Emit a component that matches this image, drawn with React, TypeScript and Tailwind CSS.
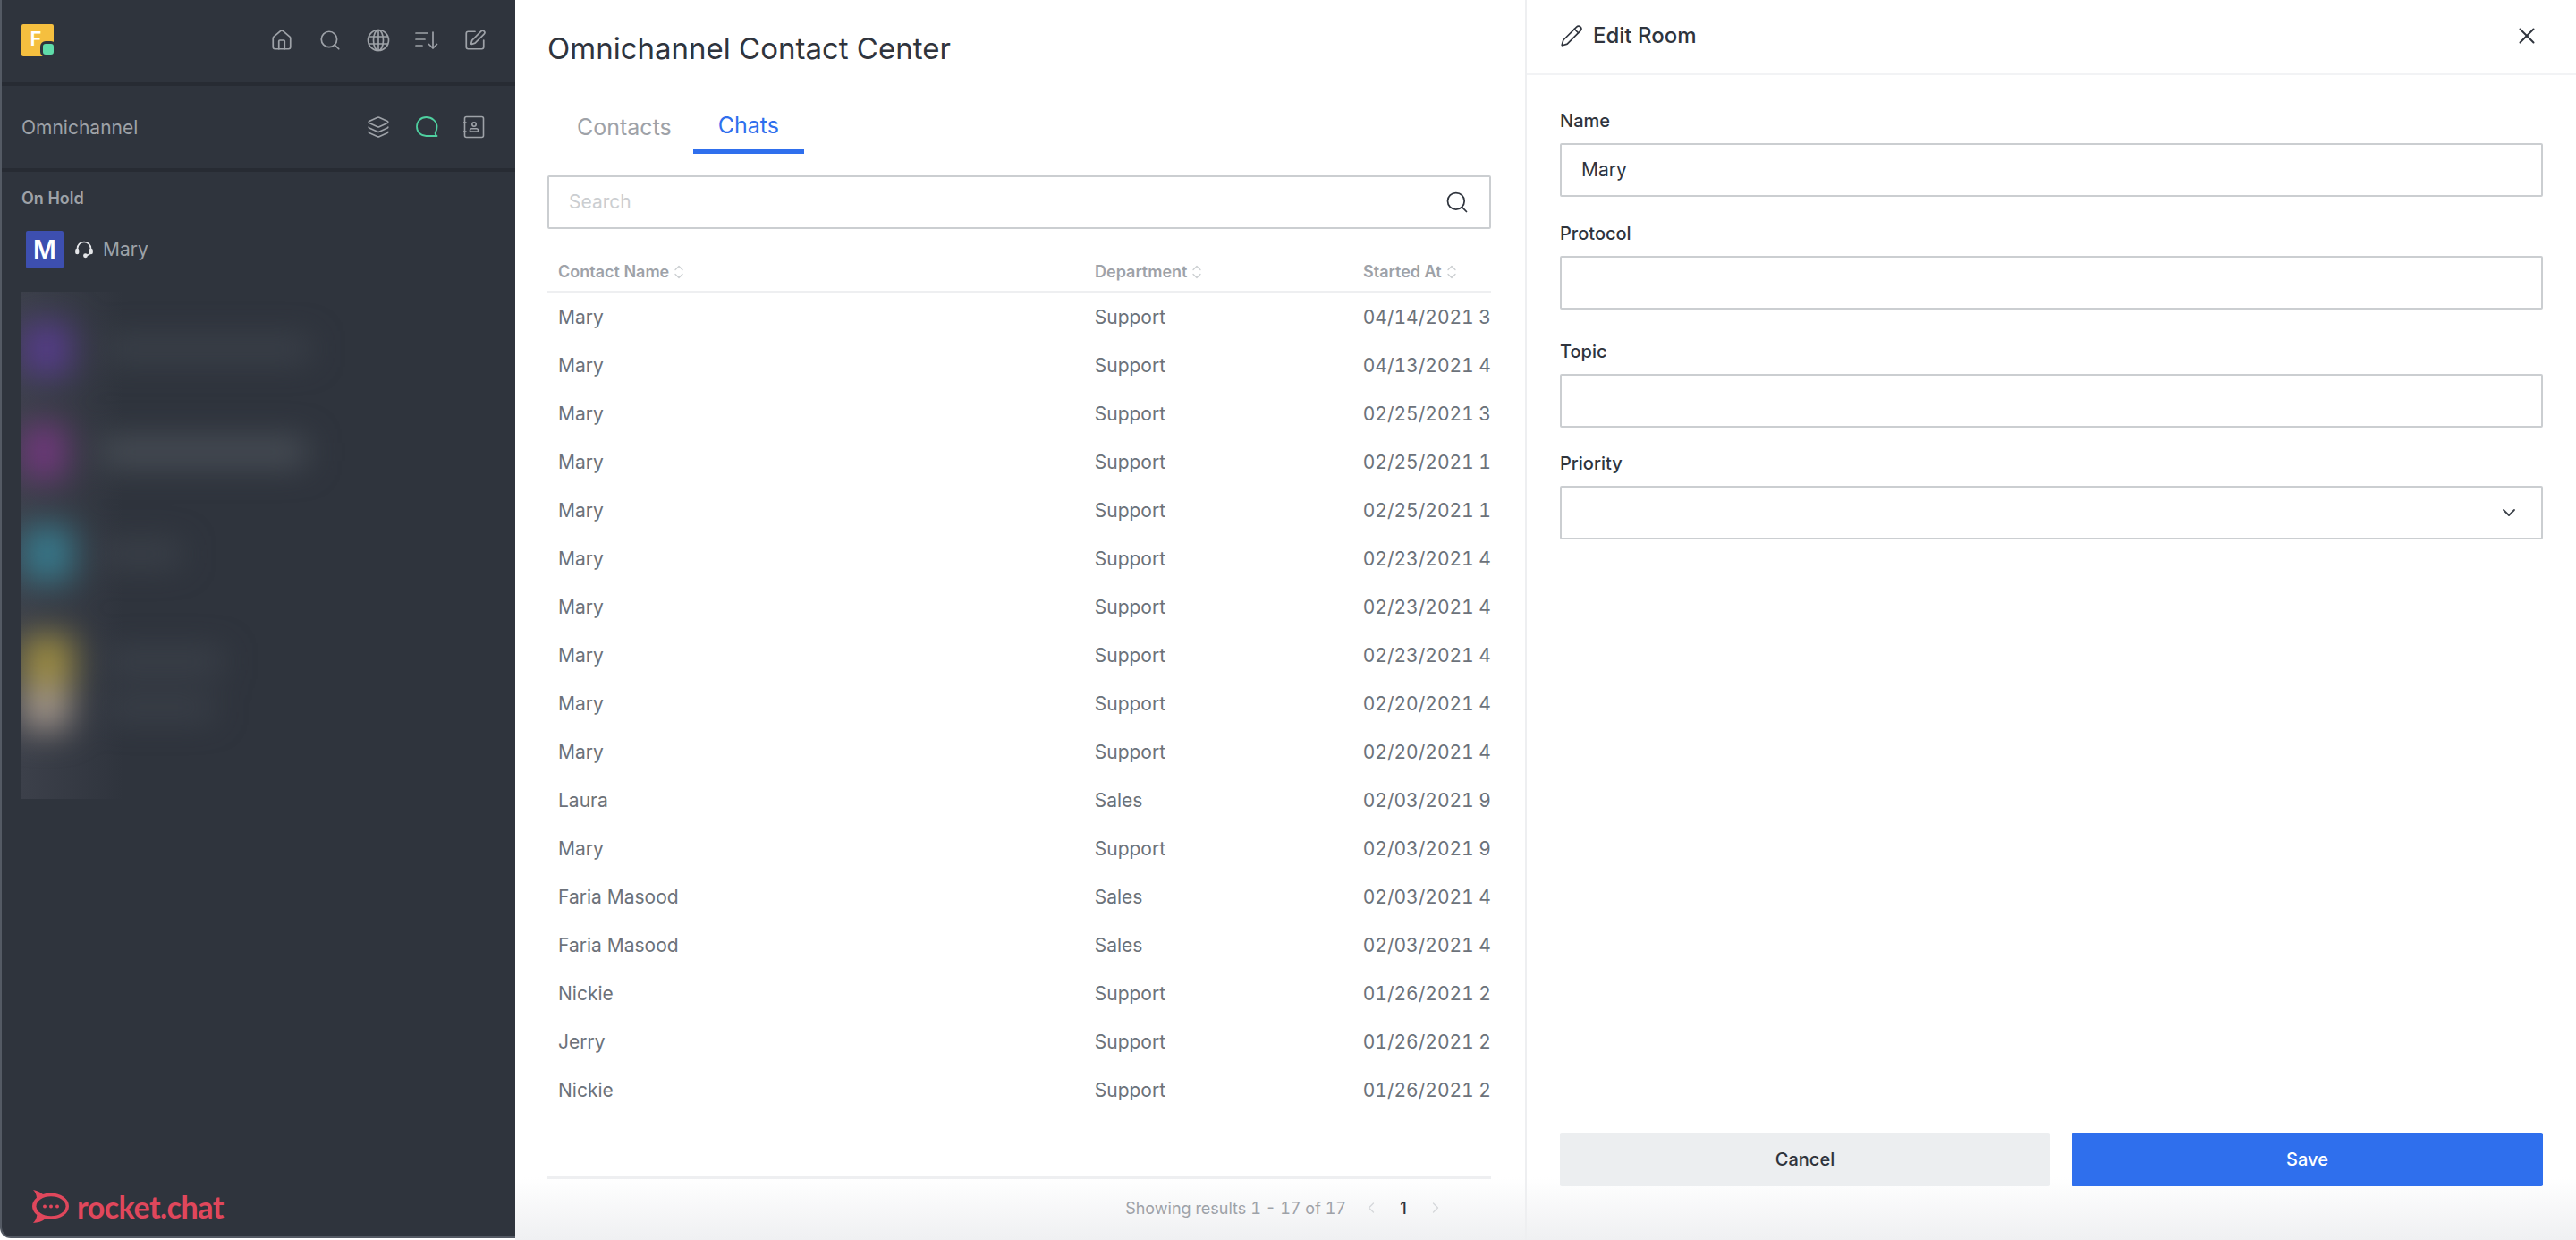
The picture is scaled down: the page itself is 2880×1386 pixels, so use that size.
import { ChevronDown, ChevronLeft, ChevronRight, House, Layers, Pencil, Search, SquarePen, X } from "lucide-react";

const rows: [string, string, string][] = [
  ["Mary", "Support", "04/14/2021 3"],
  ["Mary", "Support", "04/13/2021 4"],
  ["Mary", "Support", "02/25/2021 3"],
  ["Mary", "Support", "02/25/2021 1"],
  ["Mary", "Support", "02/25/2021 1"],
  ["Mary", "Support", "02/23/2021 4"],
  ["Mary", "Support", "02/23/2021 4"],
  ["Mary", "Support", "02/23/2021 4"],
  ["Mary", "Support", "02/20/2021 4"],
  ["Mary", "Support", "02/20/2021 4"],
  ["Laura", "Sales", "02/03/2021 9"],
  ["Mary", "Support", "02/03/2021 9"],
  ["Faria Masood", "Sales", "02/03/2021 4"],
  ["Faria Masood", "Sales", "02/03/2021 4"],
  ["Nickie", "Support", "01/26/2021 2"],
  ["Jerry", "Support", "01/26/2021 2"],
  ["Nickie", "Support", "01/26/2021 2"],
];

function Globe() {
  return (
    <svg width="26" height="26" viewBox="0 0 26 26" fill="none" stroke="#9ea2a8" strokeWidth="1.7">
      <circle cx="13" cy="13" r="11.5" />
      <ellipse cx="13" cy="13" rx="5.5" ry="11.5" />
      <path d="M13 1.5v23M2.5 9h21M2.5 17h21" />
    </svg>
  );
}

function SortList() {
  return (
    <svg width="26" height="24" viewBox="0 0 26 24" fill="none" stroke="#9ea2a8" strokeWidth="1.7" strokeLinecap="round" strokeLinejoin="round">
      <path d="M1 4h13M1 11h10M1 18h7M20 3v18M15.5 16.5 20 21l4.5-4.5" />
    </svg>
  );
}

function Bubble() {
  return (
    <svg width="26" height="26" viewBox="0 0 26 26" fill="none" stroke="#4fd0a0" strokeWidth="1.8" strokeLinecap="round" strokeLinejoin="round">
      <path d="M12.5 2C6.5 2 2 6.6 2 12.4 2 18.4 6.5 23 12.5 23h12c-1.8-1.2-2.2-3.2-1.2-5 .8-1.5 1.2-3.2 1.2-5.2C24.500 6.600 19 2 12.500 2Z" />
    </svg>
  );
}

function ContactBook() {
  return (
    <svg width="24" height="26" viewBox="0 0 24 26" fill="none" stroke="#9ea2a8" strokeWidth="1.6" strokeLinecap="round" strokeLinejoin="round">
      <rect x="1.500" y="1.500" width="21" height="23" rx="2" />
      <circle cx="12" cy="10" r="2.200" />
      <path d="M7.500 18v-1.500c0-1 .8-1.800 1.800-1.800h5.400c1 0 1.800.8 1.800 1.800V18ZM0 8h3M0 18h3" />
    </svg>
  );
}

function Headset() {
  return (
    <svg width="20" height="20" viewBox="0 0 20 20" fill="none" stroke="#e4e6e9" strokeWidth="1.700" strokeLinecap="round">
      <path d="M2.500 10V9a7.500 7.500 0 0 1 15 0v2c0 3-2 5-5 5.300" />
      <rect x="1" y="9.500" width="2.500" height="5" rx="1.200" fill="#e4e6e9" />
      <rect x="16.500" y="9.500" width="2.500" height="5" rx="1.200" fill="#e4e6e9" />
      <circle cx="11.500" cy="16.700" r="1.600" fill="#e4e6e9" />
    </svg>
  );
}

function SortArrows() {
  return (
    <svg width="10" height="16" viewBox="0 0 10 16" fill="none" stroke="#cbced1" strokeWidth="1.300" strokeLinecap="round" strokeLinejoin="round" className="ml-[6px]">
      <path d="M1 5.500 5 1.500l4 4M1 10.500l4 4 4-4" />
    </svg>
  );
}

function RocketLogo() {
  return (
    <svg width="42" height="37" viewBox="0 0 42 37" fill="none">
      <path
        d="M1 0c4 .5 8 2.600 11 5 3-.9 6-1.400 9-1.400 11 0 20 6.400 20 14.600S32 32.500 21 32.500c-2 0-4-.2-6-.6C11 35.400 6 36.500 1 37c2.500-2.500 4-5.500 4.300-9C2 25.300 0 22 0 18.200c0-3.700 1.900-7 5-9.500C4.700 5.300 3.300 2.300 1 0Z"
        fill="#e0475c"
      />
      <ellipse cx="21" cy="18.200" rx="16.500" ry="11" fill="#2f343d" />
      <circle cx="14" cy="18.500" r="2" fill="#e0475c" />
      <circle cx="21" cy="18.500" r="2" fill="#e0475c" />
      <circle cx="28" cy="18.500" r="2" fill="#e0475c" />
    </svg>
  );
}

function Field({ label, className, value, select }: { label: string; className: string; value?: string; select?: boolean }) {
  return (
    <div className={className}>
      <div className="text-[20px] leading-[24px] font-medium text-[#2f343d]">{label}</div>
      <div className="mt-[13px] flex h-[60px] items-center rounded-[2px] border-2 border-[#cbced1] bg-white pr-[24px] pb-[1px] pl-[22px] text-[21px] text-[#2f343d]">
        <span className="flex-1">{value}</span>
        {select && <ChevronDown size={24} strokeWidth={1.800} color="#3c4149" />}
      </div>
    </div>
  );
}

export default function App() {
  return (
    <div className="relative flex h-[1386px] w-[2880px] overflow-hidden bg-white font-[Inter,sans-serif]">
      <div className="pointer-events-none absolute right-0 bottom-0 left-[576px] h-[70px] bg-[linear-gradient(to_bottom,rgba(240,241,243,0),#eff0f2)]" />
      <aside className="relative flex h-[1384px] w-[576px] shrink-0 flex-col rounded-bl-[12px] border-b-2 border-l-2 border-[#545a64] bg-[#2f343d] text-[#9ea2a8]">
        <div className="flex h-[92px] shrink-0 items-center pr-[32px] pb-[2px] pl-[22px]">
          <div className="relative flex h-[36px] w-[36px] items-center justify-center rounded-[2px] bg-[#f5bf3f] pr-[4px] pb-[4px] text-[22px] font-semibold text-white">
            F
            <span className="absolute -right-[3px] -bottom-[1px] h-[18px] w-[18px] rounded-[6px] border-[3px] border-[#2f343d] bg-[#5fdcaa]" />
          </div>
          <div className="ml-auto flex items-center gap-[28px]">
            <House size={26} strokeWidth={1.600} />
            <Search size={26} strokeWidth={1.600} />
            <Globe />
            <SortList />
            <SquarePen size={26} strokeWidth={1.600} />
          </div>
        </div>
        <div className="h-[4px] shrink-0 bg-[#272b33]" />
        <div className="flex h-[92px] shrink-0 items-center pr-[34px] pl-[22px] text-[21px]">
          <span className="pt-[2px]">Omnichannel</span>
          <div className="ml-auto flex items-center gap-[28px]">
            <Layers size={26} strokeWidth={1.500} />
            <Bubble />
            <ContactBook />
          </div>
        </div>
        <div className="h-[4px] shrink-0 bg-[#272b33]" />
        <div className="pt-[18px] pl-[22px] text-[18px] leading-[24px] font-semibold">On Hold</div>
        <div className="mt-[24px] flex h-[42px] items-center pl-[27px]">
          <div className="flex h-[42px] w-[42px] items-center justify-center rounded-[2px] bg-[#3d4fb0] text-[28px] font-semibold text-white">M</div>
          <div className="ml-[13px]">
            <Headset />
          </div>
          <span className="ml-[11px] text-[21px]">Mary</span>
        </div>
        <div className="mt-[26px] ml-[22px] h-[567px] w-[380px] overflow-hidden bg-[linear-gradient(to_right,#3c404a,#2f343d_30%)]">
          <div className="flex flex-col blur-[18px]">
            <div className="mt-[34px] flex h-[60px] items-center">
              <div className="h-[60px] w-[56px] bg-[#553c88]" />
              <div className="ml-[36px] h-[20px] w-[230px] bg-[#40464f]" />
            </div>
            <div className="mt-[54px] flex h-[62px] items-center">
              <div className="h-[62px] w-[50px] bg-[#70387c]" />
              <div className="ml-[38px] h-[28px] w-[230px] bg-[#4c525a]" />
            </div>
            <div className="mt-[52px] flex h-[62px] items-center">
              <div className="h-[62px] w-[58px] bg-[#37788a]" />
              <div className="ml-[30px] h-[20px] w-[90px] bg-[#40464f]" />
            </div>
            <div className="mt-[60px] flex h-[58px] items-center">
              <div className="h-[58px] w-[58px] bg-[#9a8a42]" />
              <div className="ml-[36px] h-[20px] w-[130px] bg-[#40464f]" />
            </div>
            <div className="flex h-[48px] items-center">
              <div className="h-[48px] w-[54px] bg-[#a0948a]" />
              <div className="ml-[40px] h-[18px] w-[120px] bg-[#40464f]" />
            </div>
          </div>
        </div>
        <div className="mt-auto mb-[15px] flex items-center gap-[8px] pl-[34px]">
          <RocketLogo />
          <span className="font-[Lato,sans-serif] text-[34px] leading-[36px] font-bold tracking-[-0.5px] text-[#e0475c]">rocket.chat</span>
        </div>
      </aside>

      <main className="relative flex w-[1129px] shrink-0 flex-col pr-[38px] pl-[36px]">
        <h1 className="pt-[32px] text-[33px] leading-[44px] font-normal text-[#2f343d]">Omnichannel Contact Center</h1>
        <div className="mt-[44px] ml-[6px] flex h-[52px] text-[25px] leading-[36px]">
          <div className="pt-[4px] pr-[24px] pl-[27px] text-[#9ea2a8]">Contacts</div>
          <div className="border-b-[6px] border-[#2f6fed] px-[28px] pt-[2px] text-[#2f6fed]">Chats</div>
        </div>
        <div className="mt-[24px] flex h-[60px] items-center rounded-[2px] border-2 border-[#cbced1] pr-[22px] pl-[22px]">
          <input placeholder="Search" className="min-w-0 flex-1 bg-transparent text-[21px] outline-none placeholder:text-[#cbced1]" />
          <Search size={28} strokeWidth={1.500} color="#2f343d" />
        </div>
        <div className="flex h-[71px] items-end border-b-2 border-[#eeeff1] pb-[9px] pl-[12px] text-[18px] leading-[24px] font-semibold text-[#9ea2a8]">
          <div className="flex w-[600px] items-center">
            Contact Name
            <SortArrows />
          </div>
          <div className="flex w-[300px] items-center">
            Department
            <SortArrows />
          </div>
          <div className="flex items-center">
            Started At
            <SortArrows />
          </div>
        </div>
        <div className="flex flex-col pt-[1px] text-[21px] text-[#6c727a]">
          {rows.map((r, i) => (
            <div key={i} className="flex h-[54px] items-center pl-[12px]">
              <div className="w-[600px]">{r[0]}</div>
              <div className="w-[300px]">{r[1]}</div>
              <div className="whitespace-nowrap tabular-nums">{r[2]}</div>
            </div>
          ))}
        </div>
        <div className="mt-auto flex h-[72px] items-center justify-end border-t-4 border-[#eeeff1] pr-[44px] pb-[4px] text-[18px] text-[#9ea2a8]">
          <span className="mr-[10px] tabular-nums">Showing results 1 - 17 of 17</span>
          <div className="flex w-[36px] justify-center">
            <ChevronLeft size={20} strokeWidth={1.500} color="#d5d7da" />
          </div>
          <div className="w-[36px] text-center font-medium text-[#2f343d]">1</div>
          <div className="flex w-[36px] justify-center">
            <ChevronRight size={20} strokeWidth={1.500} color="#d5d7da" />
          </div>
        </div>
      </main>

      <section className="relative flex flex-1 flex-col border-l-2 border-[#eeeff1]">
        <div className="flex h-[84px] shrink-0 items-center border-b-2 border-[#f2f3f5] pr-[40px] pb-[2px] pl-[37px] text-[#2f343d]">
          <Pencil size={26} strokeWidth={1.500} />
          <span className="ml-[11px] text-[24px] font-medium">Edit Room</span>
          <X size={30} strokeWidth={1.600} className="ml-auto" />
        </div>
        <div className="flex flex-1 flex-col pr-[37px] pl-[37px]">
          <Field label="Name" value="Mary" className="mt-[39px]" />
          <Field label="Protocol" className="mt-[29px]" />
          <Field label="Topic" className="mt-[35px]" />
          <Field label="Priority" select className="mt-[28px]" />
          <div className="mt-auto mb-[60px] flex gap-[24px] text-[20px] font-medium">
            <div className="flex h-[60px] w-[548px] items-center justify-center rounded-[2px] bg-[#eceef0] text-[#2f343d]">Cancel</div>
            <div className="flex h-[60px] flex-1 items-center justify-center rounded-[2px] bg-[#2f6fed] text-white">Save</div>
          </div>
        </div>
      </section>
    </div>
  );
}
